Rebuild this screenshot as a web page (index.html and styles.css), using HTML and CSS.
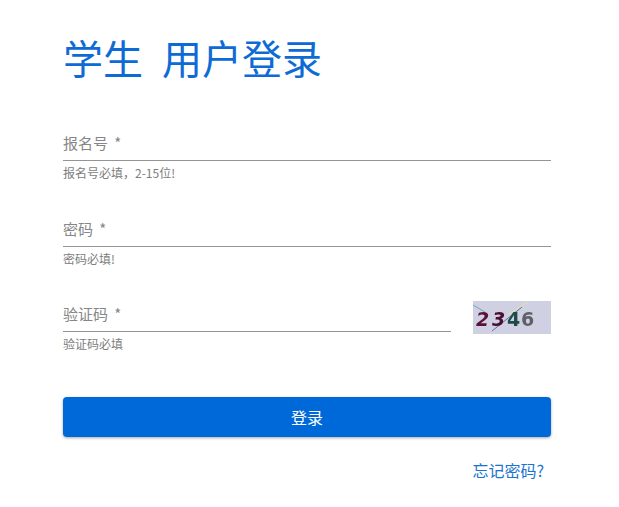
FILE: index.html
```html
<!DOCTYPE html>
<html lang="zh-CN">
<head>
    <meta charset="UTF-8">
    <meta name="viewport" content="width=device-width, initial-scale=1.0">
    <title>学生 用户登录</title>
    <link rel="stylesheet" href="styles.css">
</head>
<body>

<div class="login">
    <h1 class="title"><span class="title-role">学生</span>用户登录</h1>

    <form class="login-form">
        <div class="field">
            <div class="field-label">报名号 *</div>
            <div class="field-hint">报名号必填，2-15位!</div>
        </div>
        <div class="field">
            <div class="field-label">密码 *</div>
            <div class="field-hint">密码必填!</div>
        </div>
        <div class="captcha-row">
            <div class="field">
                <div class="field-label">验证码 *</div>
                <div class="field-hint">验证码必填</div>
            </div>
            <svg class="captcha" width="78" height="33" viewBox="0 0 78 33">
                <rect width="78" height="33" fill="#cfd0e2"/>
                <line x1="0" y1="4" x2="12" y2="11" stroke="#6fa6c4" stroke-width="1"/>
                <line x1="19" y1="30" x2="49" y2="6" stroke="#5a6fa8" stroke-width="1"/>
                <line x1="34" y1="14" x2="55" y2="1" stroke="#dfe6a0" stroke-width="1"/>
                <text x="3" y="25" class="digit digit-slant" fill="#5a1038">2</text>
                <text x="19" y="25" class="digit digit-slant" fill="#4a1030">3</text>
                <text x="34" y="25" class="digit" fill="#1f4a48">4</text>
                <text x="48" y="25" class="digit" fill="#5f5f68">6</text>
            </svg>
        </div>
        <button type="button" class="login-btn">登录</button>
        <div class="forgot"><a href="#">忘记密码?</a></div>
    </form>
</div>

</body>
</html>
```

FILE: styles.css
```css
body {
    margin: 0;
    background-color: #fff;
    font-family: "Noto Sans CJK SC", Roboto, sans-serif;
    color: #757575;
}
.login {
    width: 488px;
    padding: 32px 0 0 63px;
}
.title {
    margin: 0;
    font-size: 40px;
    line-height: 50px;
    font-weight: 400;
    color: #0e6bd6;
}
.title-role {
    margin-right: 19px;
}
.login-form {
    margin-top: 42px;
}
.field {
    flex: 1;
    margin-bottom: 29.5px;
}
.field-label {
    height: 36px;
    line-height: 38px;
    font-size: 15px;
    word-spacing: 3px;
    color: #868686;
    border-bottom: 1px solid #949494;
}
.field-hint {
    margin-top: 4px;
    font-size: 12px;
    line-height: 15px;
    color: #7d7d7d;
}
.captcha-row {
    display: flex;
    align-items: flex-start;
}
.captcha-row .field {
    margin-right: 22px;
}
.captcha {
    flex: none;
    width: 78px;
    height: 33px;
    margin-top: 6px;
    filter: blur(0.4px);
}
.digit {
    font-family: "DejaVu Sans", sans-serif;
    font-size: 19px;
    font-weight: 700;
}
.digit-slant {
    font-style: italic;
}
.login-btn {
    display: block;
    width: 100%;
    height: 40px;
    margin-top: 16px;
    border: none;
    border-radius: 4px;
    background-color: #0069d9;
    color: #fff;
    font-family: inherit;
    font-size: 16px;
    box-shadow: 0 1px 3px rgba(0, 0, 0, 0.35);
}
.forgot {
    margin-top: 23px;
    padding-right: 7px;
    text-align: right;
    font-size: 16px;
    line-height: 20px;
}
.forgot a {
    color: #1a73d0;
    text-decoration: none;
}
```
